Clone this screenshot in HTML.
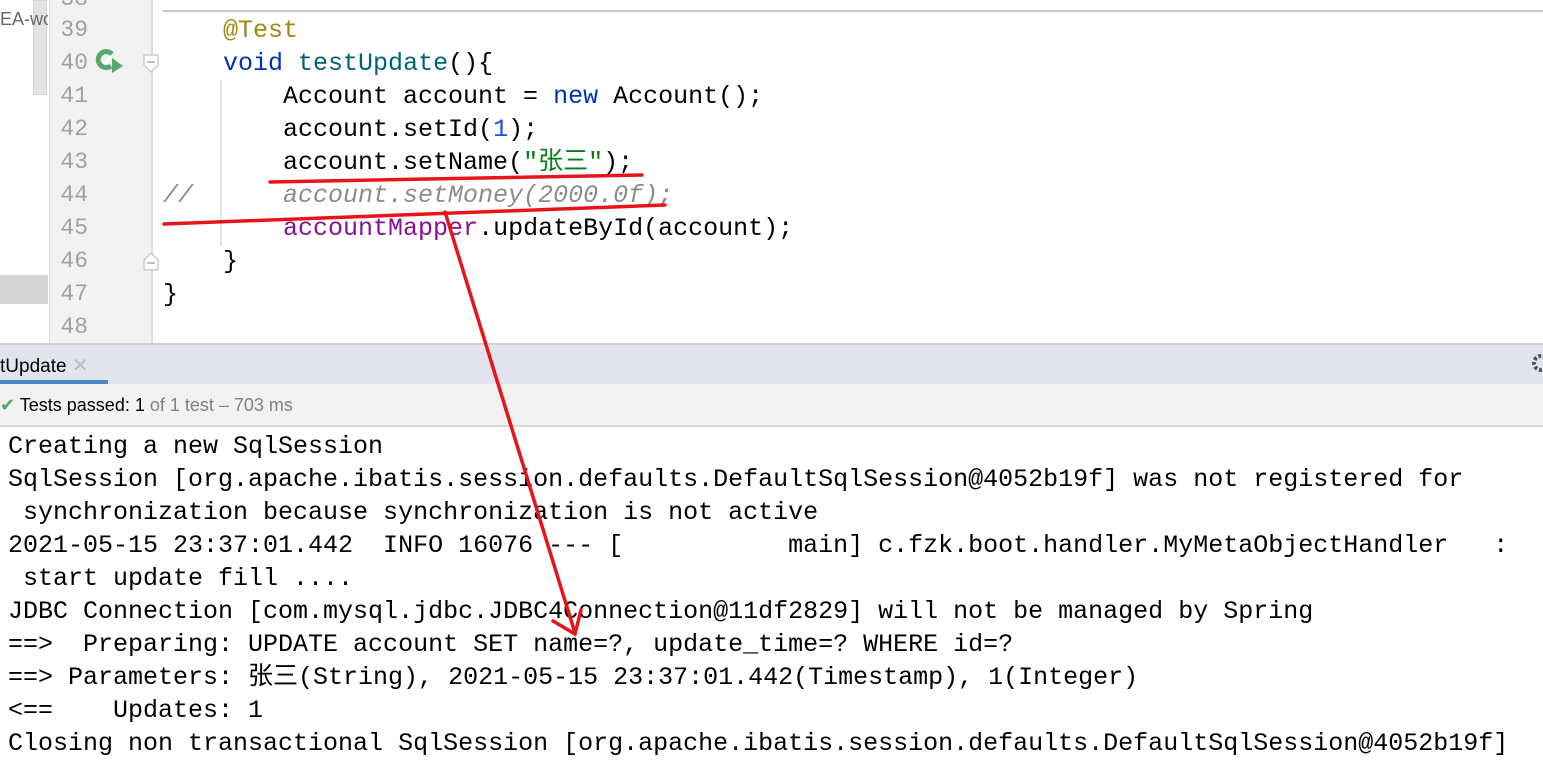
<!DOCTYPE html>
<html><head><meta charset="utf-8"><style>
*{margin:0;padding:0;box-sizing:border-box}
body{width:1543px;height:781px;overflow:hidden;background:#fff;position:relative;font-family:"Liberation Mono","Noto Sans CJK SC",monospace}
.abs{position:absolute}
.code{font-size:25px;line-height:33px;white-space:pre;color:#000}
.ln{position:absolute;left:56px;width:32px;text-align:right;font-size:23px;color:#a0a0a0;font-family:"Liberation Mono",monospace}
.sans{font-family:"Liberation Sans","Noto Sans CJK SC",sans-serif}
</style></head><body>
<div class="abs" style="left:0;top:0;width:48px;height:343px;background:#fff"></div>
<div class="abs" style="left:33px;top:0;width:14px;height:95px;background:#e2e2e2;border:1px solid #d6d6d6"></div>
<div class="abs sans" style="left:0;top:9px;font-size:18px;color:#666;width:48px;overflow:hidden;white-space:nowrap">EA-wo</div>
<div class="abs" style="left:0;top:275px;width:48px;height:29px;background:#d5d5d5"></div>
<div class="abs" style="left:49px;top:0;width:104px;height:343px;background:#f2f2f2;border-left:1px solid #ddd;border-right:2px solid #ddd"></div>
<div class="abs" style="left:163px;top:10px;width:1380px;height:2px;background:#c8c8c8"></div>
<div class="ln" style="top:-17px;line-height:33px">38</div>
<div class="ln" style="top:14px;line-height:33px">39<br>40<br>41<br>42<br>43<br>44<br>45<br>46<br>47<br>48</div>
<svg class="abs" style="left:95px;top:48px" width="30" height="28"><path d="M17 6 A8 8 0 1 0 16 18" fill="none" stroke="#59a869" stroke-width="5"/><path d="M6 12 l4 4 l6-8" fill="none" stroke="#fff" stroke-width="2"/><path d="M17 10 L28 18 L17 25 Z" fill="#59a869"/></svg>
<svg class="abs" style="left:142px;top:53px" width="20" height="22"><path d="M2 2 H16 V12 L9 19 L2 12 Z" fill="#fff" stroke="#ccc" stroke-width="1.5"/><path d="M5 9 H13" stroke="#aaa" stroke-width="1.5"/></svg>
<svg class="abs" style="left:142px;top:250px" width="20" height="22"><path d="M2 20 H16 V10 L9 3 L2 10 Z" fill="#fff" stroke="#ccc" stroke-width="1.5"/><path d="M5 13 H13" stroke="#aaa" stroke-width="1.5"/></svg>
<div class="abs" style="left:220px;top:80px;width:2px;height:166px;background:#e4e4e4"></div>
<div class="abs code" style="left:163px;top:14px"><span style="color:#9e880d">    @Test</span>
    <span style="color:#0033b3">void</span> <span style="color:#00627a">testUpdate</span>(){
        Account account = <span style="color:#0033b3">new</span> Account();
        account.setId(<span style="color:#1750eb">1</span>);
        account.setName(<span style="color:#067d17">"张三"</span>);
<span style="color:#8c8c8c;font-style:italic">//      account.setMoney(2000.0f);</span>
        <span style="color:#871094">accountMapper</span>.updateById(account);
    }
}</div>
<div class="abs" style="left:0;top:343px;width:1543px;height:2px;background:#d0d0d0"></div>
<div class="abs" style="left:0;top:345px;width:1543px;height:39px;background:#e1e4ec"></div>
<div class="abs sans" style="left:0;top:353px;font-size:19px;color:#000">tUpdate <span style="color:#bbb;font-size:20px">✕</span></div>
<div class="abs" style="left:0;top:380px;width:108px;height:4px;background:#4a88c7"></div>
<svg class="abs" style="left:1530px;top:352px" width="13" height="22"><circle cx="11" cy="11" r="7" fill="none" stroke="#555" stroke-width="4" stroke-dasharray="3 2"/></svg>
<div class="abs" style="left:0;top:384px;width:1543px;height:43px;background:#f2f2f2;border-bottom:2px solid #d8d8d8"></div>
<div class="abs sans" style="left:0;top:395px;font-size:18px;color:#000"><span style="color:#59a869">✔</span> Tests passed: 1 <span style="color:#808080">of 1 test – 703 ms</span></div>
<div class="abs code" style="left:8px;top:430px">Creating a new SqlSession
SqlSession [org.apache.ibatis.session.defaults.DefaultSqlSession@4052b19f] was not registered for
 synchronization because synchronization is not active
2021-05-15 23:37:01.442  INFO 16076 --- [           main] c.fzk.boot.handler.MyMetaObjectHandler   :
 start update fill ....
JDBC Connection [com.mysql.jdbc.JDBC4Connection@11df2829] will not be managed by Spring
==>  Preparing: UPDATE account SET name=?, update_time=? WHERE id=?
==> Parameters: 张三(String), 2021-05-15 23:37:01.442(Timestamp), 1(Integer)
&lt;==    Updates: 1
Closing non transactional SqlSession [org.apache.ibatis.session.defaults.DefaultSqlSession@4052b19f]</div>
<svg class="abs" style="left:0;top:0" width="1543" height="781">
<g stroke="#e8141c" stroke-width="3.5" fill="none" stroke-linecap="round">
<path d="M270 182 L642 175"/>
<path d="M164 224 L665 205"/>
<path d="M445 212 L575 633"/>
<path d="M553 621 L575 634 L581 610"/>
</g></svg>
</body></html>
